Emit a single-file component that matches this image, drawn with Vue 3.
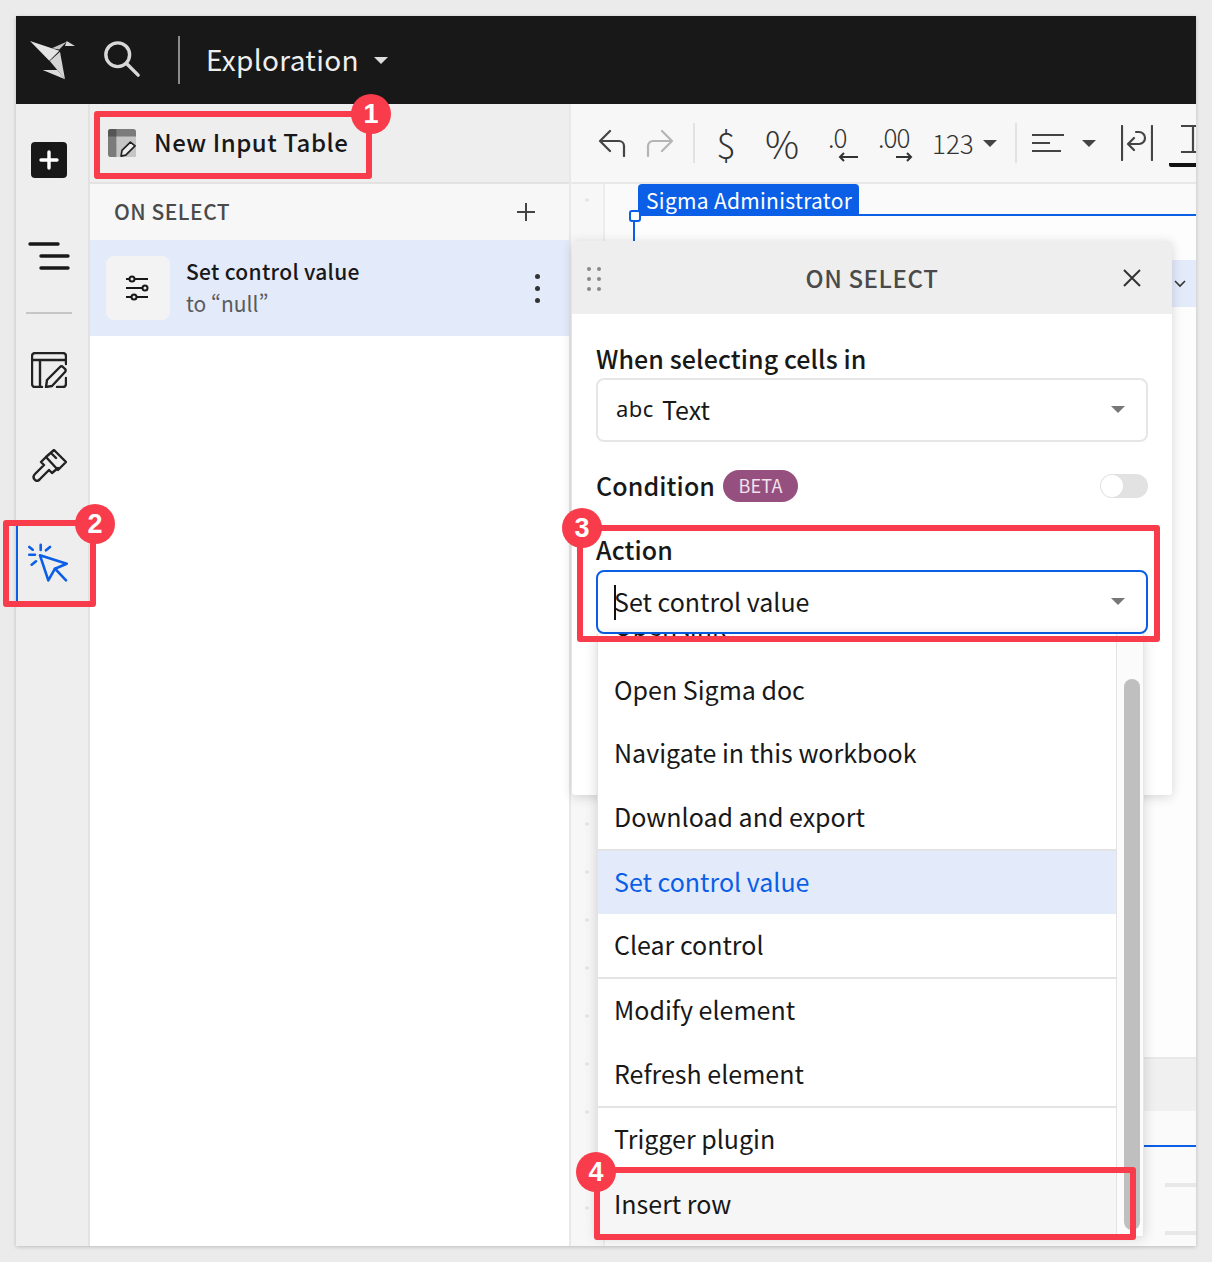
<script setup>
const groups = [
  ['Open link', 'Open Sigma doc', 'Navigate in this workbook', 'Download and export'],
  ['Set control value', 'Clear control'],
  ['Modify element', 'Refresh element'],
  ['Trigger plugin', 'Insert row'],
]
const badges = [
  { n: 1, cls: 'b1' },
  { n: 2, cls: 'b2' },
  { n: 3, cls: 'b3' },
  { n: 4, cls: 'b4' },
]
const dots = Array.from({ length: 22 }, (_, i) => i)
</script>

<template>
  <div class="page">
    <div class="frame">
      <header class="top">
        <svg class="logo" width="46" height="40" viewBox="30 40 46 40">
          <polygon points="30,41 59.3,50.7 49.3,60.7" fill="#e4e4e4" />
          <polygon points="51.7,48.3 66.7,41.7 59.3,49.5" fill="#c4c4c4" />
          <polygon points="66.7,41 75,46 65,46" fill="#d8d8d8" />
          <polygon points="49.8,61 60,51.7 65,79.3" fill="#d4d4d4" />
          <polygon points="42.7,70 57.3,70 65,79.3" fill="#dcdcdc" />
        </svg>
        <svg class="search" width="38" height="38" viewBox="0 0 40 40" fill="none" stroke="#d8d8d8" stroke-width="3.6" stroke-linecap="round">
          <circle cx="15.5" cy="15.5" r="12.5" />
          <path d="M24.5 24.5L37 37" />
        </svg>
        <i class="top-sep"></i>
        <span class="title">Exploration</span>
        <i class="top-caret"></i>
      </header>

      <div class="body">
        <nav class="rail">
          <span class="plus-btn">
            <svg width="20" height="20" viewBox="0 0 20 20" stroke="#fff" stroke-width="3.4" stroke-linecap="round"><path d="M10 2v16M2 10h16" /></svg>
          </span>
          <svg class="r-list" width="42" height="32" viewBox="0 0 42 32" stroke="#181818" stroke-width="3.4" stroke-linecap="round"><path d="M2 3h28M13 15h27M13 27h27" /></svg>
          <i class="rail-sep"></i>
          <svg class="r-table" width="36" height="36" viewBox="0 0 36 36" fill="none" stroke="#222" stroke-width="2.4" stroke-linejoin="round" stroke-linecap="round">
            <path d="M11 35H4a3 3 0 0 1-3-3V4a3 3 0 0 1 3-3h28a3 3 0 0 1 3 3v8M1 8h34M9 8v27M35 26v6a3 3 0 0 1-3 3h-6" />
            <path d="M15 35l1-7 13-13a2 2 0 0 1 3 0l2 2a2 2 0 0 1 0 3L21 34z" />
          </svg>
          <svg class="r-brush" width="35" height="33" viewBox="0 0 35 33" fill="none" stroke="#222" stroke-width="2.4" stroke-linejoin="round" stroke-linecap="round">
            <path d="M14 8l8-7 12 12-8 8zM20 5l4 4M14 8l-5 5 3 3-9 9q-3 3 0 6 3 2 5-1l9-9 3 3 6-5" />
          </svg>
          <span class="r-action">
            <svg width="40" height="40" viewBox="0 0 40 40" fill="none" stroke="#0a5fe6" stroke-width="2.6" stroke-linecap="round" stroke-linejoin="round">
              <path d="M12 12.3l26.7 8.4-11.7 5-6.7 11.6z" />
              <path d="M27 25.7l11 11.6M12.7 1.7V7M1.3 4l3.4 2.7M22 4l-4 3.3M1.3 11.7H7M3.7 21.7L8 18.3" />
            </svg>
          </span>
        </nav>

        <aside class="panel">
          <div class="p-head">
            <svg width="28" height="28" viewBox="0 0 30 30">
              <rect width="30" height="30" rx="3" fill="#7b7b7b" />
              <path d="M0 3a3 3 0 0 1 3-3h6v8H0z" fill="#555" />
              <path d="M9 8h21v19a3 3 0 0 1-3 3H9z" fill="#c6c6c6" />
              <path d="M14 29l1-6 9-9 5 4-10 10z" fill="#eee" stroke="#222" stroke-width="1.8" stroke-linejoin="round" />
            </svg>
            <span class="p-title">New Input Table</span>
          </div>
          <div class="p-sub">
            <span class="caps">ON SELECT</span>
            <svg width="18" height="18" viewBox="0 0 18 18" stroke="#444" stroke-width="2"><path d="M9 0v18M0 9h18" /></svg>
          </div>
          <div class="p-row">
            <span class="p-icon">
              <svg width="26" height="26" viewBox="0 0 26 26" fill="#ededed" stroke="#181818" stroke-width="2">
                <path d="M1 4h22M1 13h22M1 22h22" />
                <circle cx="7" cy="4" r="2.5" /><circle cx="20" cy="13" r="2.5" /><circle cx="9" cy="22" r="2.5" />
              </svg>
            </span>
            <span class="p-text">
              <b>Set control value</b>
              <em>to “null”</em>
            </span>
            <span class="kebab"><i></i><i></i><i></i></span>
          </div>
        </aside>

        <main class="work">
          <div class="toolbar">
            <svg class="t-undo" width="28" height="28" viewBox="0 0 28 28" fill="none" stroke="#444" stroke-width="2.2" stroke-linecap="round" stroke-linejoin="round"><path d="M12 2L2 12l10 10M2 12h19a5 5 0 0 1 5 5v10" /></svg>
            <svg class="t-redo" width="28" height="28" viewBox="0 0 28 28" fill="none" stroke="#b5b5b5" stroke-width="2.2" stroke-linecap="round" stroke-linejoin="round"><path d="M16 2l10 10-10 10M26 12H7a5 5 0 0 0-5 5v10" /></svg>
            <i class="t-sep s1"></i>
            <span class="t-txt t-dollar">$</span>
            <span class="t-txt t-pct">%</span>
            <span class="t-dec d1"><span>.0</span>
              <svg width="20" height="10" viewBox="0 0 20 10" fill="none" stroke="#333" stroke-width="2"><path d="M20 5H2M6 1L2 5l4 4" /></svg>
            </span>
            <span class="t-dec d2"><span>.00</span>
              <svg width="17" height="10" viewBox="0 0 17 10" fill="none" stroke="#333" stroke-width="2"><path d="M0 5h15M11 1l4 4-4 4" /></svg>
            </span>
            <span class="t-num">123</span>
            <i class="caret c1"></i>
            <i class="t-sep s2"></i>
            <svg class="t-align" width="32" height="18" viewBox="0 0 32 18" stroke="#444" stroke-width="2"><path d="M0 1h32M0 9h18M0 17h29" /></svg>
            <i class="caret c2"></i>
            <svg class="t-wrap" width="32" height="36" viewBox="0 0 32 36" fill="none" stroke="#444" stroke-width="2.2" stroke-linecap="round" stroke-linejoin="round"><path d="M1 1v34M31 1v34M13 13l-6 6 6 6M7 19h11a6 6 0 0 0 0-12h-3" /></svg>
            <span class="t-type">
              <svg width="24" height="30" viewBox="0 0 24 30" fill="none" stroke="#444" stroke-width="2.2"><path d="M0 2h24M12 2v26M0 28h24" /></svg>
            </span>
          </div>
          <div class="canvas">
            <div class="gutter"><i v-for="d in dots" :key="d"></i></div>
            <div class="sheet">
              <div class="tag">Sigma Administrator</div>
              <div class="element">
                <i class="handle"></i>
                <div class="el-row"><svg width="12" height="8" viewBox="0 0 12 8" fill="none" stroke="#333" stroke-width="1.6"><path d="M1 1l5 5 5-5" /></svg></div>
              </div>
              <div class="strip"></div>
              <div class="blue-line"></div>
              <div class="bar b-a"></div>
              <div class="bar b-b"></div>
            </div>
          </div>
        </main>
      </div>
    </div>

    <section class="popup">
      <div class="pop-head">
        <span class="grip"><i v-for="g in 6" :key="g"></i></span>
        <span class="caps">ON SELECT</span>
        <svg width="18" height="18" viewBox="0 0 18 18" stroke="#333" stroke-width="2"><path d="M1 1l16 16M17 1L1 17" /></svg>
      </div>
      <div class="pop-body">
        <div class="label l-when">When selecting cells in</div>
        <div class="select">
          <span class="abc">abc</span><span>Text</span><i class="sel-caret"></i>
        </div>
        <div class="cond">
          <span class="label">Condition</span>
          <span class="beta">BETA</span>
          <span class="toggle"><i></i></span>
        </div>
        <div class="label l-action">Action</div>
        <div class="select focus">
          <i class="cursor"></i><span>Set control value</span><i class="sel-caret"></i>
        </div>
      </div>
    </section>

    <section class="menu">
      <div class="menu-list">
        <ul v-for="(g, i) in groups" :key="i">
          <li v-for="item in g" :key="item" :class="{ on: item === 'Set control value', hov: item === 'Insert row' }">{{ item }}</li>
        </ul>
      </div>
      <i class="thumb"></i>
    </section>

    <i class="mark m1"></i>
    <i class="mark m2"></i>
    <i class="mark m3"></i>
    <i class="mark m4"></i>
    <span v-for="b in badges" :key="b.n" class="badge" :class="b.cls">{{ b.n }}</span>
  </div>
</template>

<style scoped>
.page {
  position: relative;
  width: 1212px;
  height: 1262px;
  padding: 16px;
  box-sizing: border-box;
  overflow: hidden;
  background: #ebebeb;
  font-family: "Noto Sans CJK SC", "Noto Sans", sans-serif;
  color: #181818;
  font-feature-settings: "pwid";
}
i { display: block; font-style: normal; }
.frame {
  width: 1180px;
  height: 1230px;
  display: flex;
  flex-direction: column;
  overflow: hidden;
  background: #fff;
  box-shadow: 0 1px 4px rgba(0, 0, 0, 0.2);
}
.top {
  flex: 0 0 88px;
  background: #181818;
  display: flex;
  align-items: center;
  color: #fff;
}
.logo { margin-left: 14px; }
.search { margin-left: 27px; margin-top: -2px; }
.top-sep { width: 2px; height: 48px; background: #8b8b8b; margin-left: 37px; }
.title { font-size: 28px; line-height: 38px; height: 40px; margin-left: 26px; color: #eee; letter-spacing: 0.3px; }
.top-caret {
  margin-left: 15px; width: 0; height: 0;
  border-left: 7px solid transparent; border-right: 7px solid transparent;
  border-top: 7px solid #ddd;
}
.body { flex: 1; display: flex; min-height: 0; }
.rail {
  flex: 0 0 74px;
  min-width: 0;
  box-sizing: border-box;
  background: #eee;
  border-right: 2px solid #e2e2e2;
  padding-right: 6px;
  display: flex;
  flex-direction: column;
  align-items: center;
}
.rail > * { flex: none; }
.plus-btn {
  width: 36px; height: 36px; margin-top: 38px; border-radius: 4px;
  background: #181818; display: flex; align-items: center; justify-content: center;
}
.r-list { margin-top: 63px; }
.rail-sep { width: 46px; height: 2px; background: #c6c6c6; margin-top: 39px; }
.r-table { margin-top: 38px; }
.r-brush { margin-top: 61px; }
.r-action {
  align-self: flex-start; width: 72px; margin-top: 40px; height: 81px;
  border-left: 2px solid #0a5fe6;
  display: flex; align-items: center; justify-content: center;
  box-sizing: border-box; padding-right: 10px;
}
.panel {
  flex: 0 0 481px;
  box-sizing: border-box;
  border-right: 2px solid #e8e8e8;
  display: flex;
  flex-direction: column;
  background: #fff;
}
.p-head {
  flex: 0 0 80px;
  box-sizing: border-box;
  background: #eee;
  border-bottom: 2px solid #e2e2e2;
  display: flex;
  align-items: center;
  padding-left: 18px;
  gap: 18px;
}
.p-title { font-size: 24px; line-height: 34px; height: 36px; font-weight: 500; letter-spacing: 0.55px; }
.p-sub {
  flex: 0 0 56px;
  background: #f7f7f7;
  display: flex;
  align-items: center;
  justify-content: space-between;
  padding: 0 34px 0 24px;
}
.caps { font-size: 21px; line-height: 28px; height: 30px; font-weight: 500; color: #4a4a4a; letter-spacing: 0.5px; }
.p-row {
  flex: 0 0 96px;
  background: #e3eafa;
  display: flex;
  align-items: center;
  padding-left: 16px;
}
.p-icon {
  width: 64px; height: 64px; border-radius: 8px; background: #f3f3f3;
  display: flex; align-items: center; justify-content: center;
}
.p-text { display: flex; flex-direction: column; margin-left: 16px; flex: 1; }
.p-text b { font-size: 21px; line-height: 32px; font-weight: 500; letter-spacing: 0.3px; margin-top: -2px; }
.p-text em { font-size: 21px; line-height: 32px; font-style: normal; color: #5a5a5a; }
.kebab { display: flex; flex-direction: column; gap: 7px; margin-right: 29px; }
.kebab i { width: 5px; height: 5px; border-radius: 50%; background: #333; }
.work { flex: 1; min-width: 0; display: flex; flex-direction: column; background: #fafafa; }
.toolbar {
  flex: 0 0 80px;
  box-sizing: border-box;
  background: #f7f7f7;
  border-bottom: 2px solid #e8e8e8;
  display: flex;
  align-items: center;
  overflow: hidden;
}
.toolbar > * { flex: none; }
.t-undo { margin-left: 27px; }
.t-redo { margin-left: 20px; }
.t-sep { width: 2px; height: 40px; background: #e2e2e2; }
.s1 { margin-left: 19px; }
.t-txt { font-weight: 300; color: #333; line-height: 44px; }
.t-dollar { font-size: 36px; margin-left: 20px; width: 22px; text-align: center; }
.t-pct { font-size: 38px; margin-left: 27px; width: 36px; text-align: center; }
.t-dec {
  font-size: 26px; line-height: 26px; font-weight: 300; color: #333;
  display: flex; flex-direction: column;
  letter-spacing: -1px;
}
.t-dec svg { align-self: flex-end; margin-top: 2px; }
.d1 { margin-left: 28px; width: 30px; }
.d2 { margin-left: 20px; width: 35px; }
.t-num { font-size: 26px; line-height: 36px; color: #333; margin-left: 19px; width: 46px; font-weight: 300; }
.caret { width: 0; height: 0; border-left: 7px solid transparent; border-right: 7px solid transparent; border-top: 7px solid #444; }
.c1 { margin-left: 5px; }
.s2 { margin-left: 18px; }
.t-align { margin-left: 15px; }
.c2 { margin-left: 18px; }
.t-wrap { margin-left: 25px; }
.t-type {
  margin-left: 16px; height: 43px; width: 40px; align-self: flex-start; margin-top: 20px;
  border-bottom: 4px solid #111; box-sizing: border-box; border-radius: 0 0 0 2px;
  padding-left: 12px;
}
.canvas { flex: 1; display: flex; min-height: 0; }
.gutter {
  flex: 0 0 34px; box-sizing: border-box;
  background: #f7f7f7; border-right: 2px solid #ececec;
  display: flex; flex-direction: column; align-items: center; gap: 44px; padding-top: 14px; overflow: hidden;
}
.gutter i { flex: none; width: 4px; height: 4px; border-radius: 50%; background: #e6e6e6; }
.sheet { flex: 1; min-width: 0; display: flex; flex-direction: column; }
.tag {
  align-self: flex-start; margin-left: 33px;
  width: 221px; height: 30px; padding: 0 8px; box-sizing: border-box;
  background: #0a5fe6; color: #fff; border-radius: 4px 4px 0 0;
  font-size: 21px; line-height: 32px; letter-spacing: 0.3px; white-space: nowrap;
}
.element {
  position: relative;
  margin-left: 28px;
  height: 843px;
  border-top: 2px solid #0a5fe6;
  border-left: 2px solid #0a5fe6;
  background: #fdfdfd;
  box-sizing: border-box;
}
.handle {
  position: absolute; left: -6px; top: -6px; width: 12px; height: 12px;
  box-sizing: border-box; background: #fff; border: 2px solid #0a5fe6; border-radius: 3px;
}
.el-row {
  margin-top: 44px; height: 47px; background: #e3eafa;
  display: flex; align-items: center; justify-content: flex-end; padding-right: 10px;
}
.strip { height: 54px; background: #f0f0f0; border-top: 2px solid #e8e8e8; box-sizing: border-box; }
.blue-line { height: 2px; background: #0a5fe6; margin: 34px 0 0 0; }
.bar { height: 4px; background: #e8e8e8; margin-left: 560px; }
.b-a { margin-top: 36px; }
.b-b { margin-top: 44px; }

.popup {
  position: absolute; left: 572px; top: 241px; width: 600px; height: 554px;
  background: #fff; border-radius: 3px;
  box-shadow: 0 2px 12px rgba(0, 0, 0, 0.16);
}
.pop-head {
  height: 73px; background: #eee; display: flex; align-items: center;
  justify-content: center; position: relative; border-radius: 3px 3px 0 0;
}
.pop-head .caps { font-size: 24px; letter-spacing: 0.6px; line-height: 30px; }
.pop-head svg { position: absolute; right: 31px; top: 28px; }
.grip { position: absolute; left: 15px; top: 26px; display: grid; grid-template-columns: 4px 4px; gap: 6px; }
.grip i { width: 4px; height: 4px; border-radius: 50%; background: #888; }
.pop-body { padding: 27px 24px 0; }
.label { font-size: 25px; line-height: 34px; height: 36px; font-weight: 500; letter-spacing: 0.1px; }
.select {
  height: 64px; margin-top: 1px; box-sizing: border-box;
  border: 2px solid #e6e6e6; border-radius: 8px;
  display: flex; align-items: center; padding: 0 20px 2px 18px;
  font-size: 25px; line-height: 36px; position: relative; background: #fff;
}
.abc { font-size: 22px; margin-right: 8px; margin-top: -3px; letter-spacing: 0.5px; font-family: "Noto Sans", sans-serif; }
.sel-caret {
  position: absolute; right: 21px; top: 26px; width: 0; height: 0;
  border-left: 7px solid transparent; border-right: 7px solid transparent; border-top: 7px solid #777;
}
.cond { display: flex; align-items: center; margin-top: 26px; height: 36px; }
.beta {
  margin-left: 8px; width: 75px; height: 32px; border-radius: 16px;
  background: #96507f; color: #f1e3ec; font-size: 18px; line-height: 30px;
  text-align: center; letter-spacing: 0.2px;
}
.toggle { margin-left: auto; width: 48px; height: 24px; border-radius: 12px; background: #e2e2e2; position: relative; }
.toggle i { position: absolute; left: 1px; top: 1px; width: 22px; height: 22px; border-radius: 50%; background: #fff; }
.l-action { margin-top: 28px; }
.focus { border-color: #0a5fe6; padding-left: 16px; margin-top: 2px; }
.cursor { position: absolute; left: 16px; top: 13px; width: 2px; height: 35px; background: #111; }

.menu {
  position: absolute; left: 597px; top: 634px; width: 547px; height: 602px;
  background: #fbfbfb; overflow: hidden;
  box-shadow: 0 2px 12px rgba(0, 0, 0, 0.16);
  border-right: 1px solid #e6e6e6; box-sizing: border-box;
}
.menu-list { width: 520px; margin-top: -39px; background: #fff; border-left: 1px solid #e2e2e2; border-right: 1px solid #e2e2e2; box-sizing: border-box; }
.menu-list ul { list-style: none; margin: 0; padding: 0; border-bottom: 2px solid #e4e4e4; }
.menu-list ul:last-child { border-bottom: 0; }
.menu-list li {
  height: 63.5px; box-sizing: border-box; padding-left: 16px;
  font-size: 25px; line-height: 60px;
}
.menu-list ul:nth-child(2) li { height: 63px; }
.menu-list ul:nth-child(4) li { height: 64px; }
.menu-list li.on { background: #e3eafa; color: #0a5fe6; }
.menu-list ul li.hov { background: #f6f6f6; height: 70px; line-height: 62px; }
.thumb { position: absolute; left: 527px; top: 45px; width: 16px; height: 551px; border-radius: 8px; background: #bfbfbf; }

.mark {
  position: absolute; box-sizing: border-box;
  border: 6px solid #f93c4b; border-radius: 3px;
}
.m1 { left: 94px; top: 111px; width: 278px; height: 68px; }
.m2 { left: 3px; top: 520px; width: 93px; height: 87px; }
.m3 { left: 577px; top: 525px; width: 583px; height: 117px; }
.m4 { left: 594px; top: 1167px; width: 542px; height: 73px; }
.badge {
  position: absolute; width: 40px; height: 40px; border-radius: 50%;
  background: #f93c4b; color: #fff; font-family: "Liberation Sans", sans-serif;
  font-weight: 700; font-size: 27px; line-height: 40px; text-align: center;
}
.b1 { left: 351px; top: 94px; }
.b2 { left: 75px; top: 504px; }
.b3 { left: 562px; top: 508px; }
.b4 { left: 576px; top: 1152px; }
</style>

<style>
html, body { margin: 0; background: #ebebeb; }
</style>
